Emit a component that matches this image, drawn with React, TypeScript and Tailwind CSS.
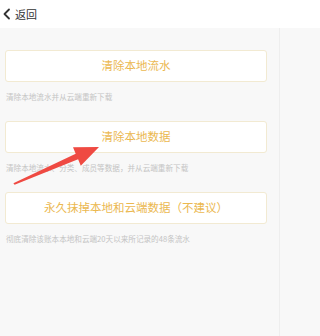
import React from "react";

const font = { fontFamily: '"Noto Sans CJK SC", "Noto Sans", sans-serif' };

const options = [
  { label: "清除本地流水", note: "清除本地流水并从云端重新下载" },
  { label: "清除本地数据", note: "清除本地流水、分类、成员等数据，并从云端重新下载" },
  { label: "永久抹掉本地和云端数据（不建议）", note: "彻底清除该账本本地和云端20天以来所记录的48条流水" },
];

export default function App() {
  return (
    <div className="relative h-screen w-full overflow-hidden bg-[#f8f8f8]" style={font}>
      <div className="flex h-[28px] items-center bg-white">
        <svg width="14" height="14" viewBox="0 0 14 14" className="ml-[1px]">
          <polyline points="8,2.5 3.5,7 8,11.5" fill="none" stroke="#333" strokeWidth="1.8" strokeLinecap="round" strokeLinejoin="round" />
        </svg>
        <span className="text-[11px] leading-none text-[#333]">返回</span>
      </div>

      <div className="flex w-[280px] flex-col border-r border-[#eeeeee] pt-[22px] pb-[100px]">
        {options.map((o) => (
          <div key={o.label} className="mb-[19px] flex flex-col">
            <div className="ml-[5px] flex h-[32px] w-[262px] items-center justify-center rounded-[3px] border border-[#f2ead2] bg-white">
              <span className="text-[11.5px] text-[#ebb850]">{o.label}</span>
            </div>
            <div className="ml-[6px] mt-[10px] h-[10px] text-[7.6px] leading-[10px] text-[#c4c4c4]">{o.note}</div>
          </div>
        ))}
      </div>

      <svg className="pointer-events-none absolute left-0 top-0" width="283" height="336" viewBox="0 0 283 336">
        <polygon
          points="99,147 73,147.3 75.7,153.7 13.4,183.2 14.6,184.8 78.1,159.3 80.8,165.7"
          fill="#ef4a42"
        />
      </svg>
    </div>
  );
}
